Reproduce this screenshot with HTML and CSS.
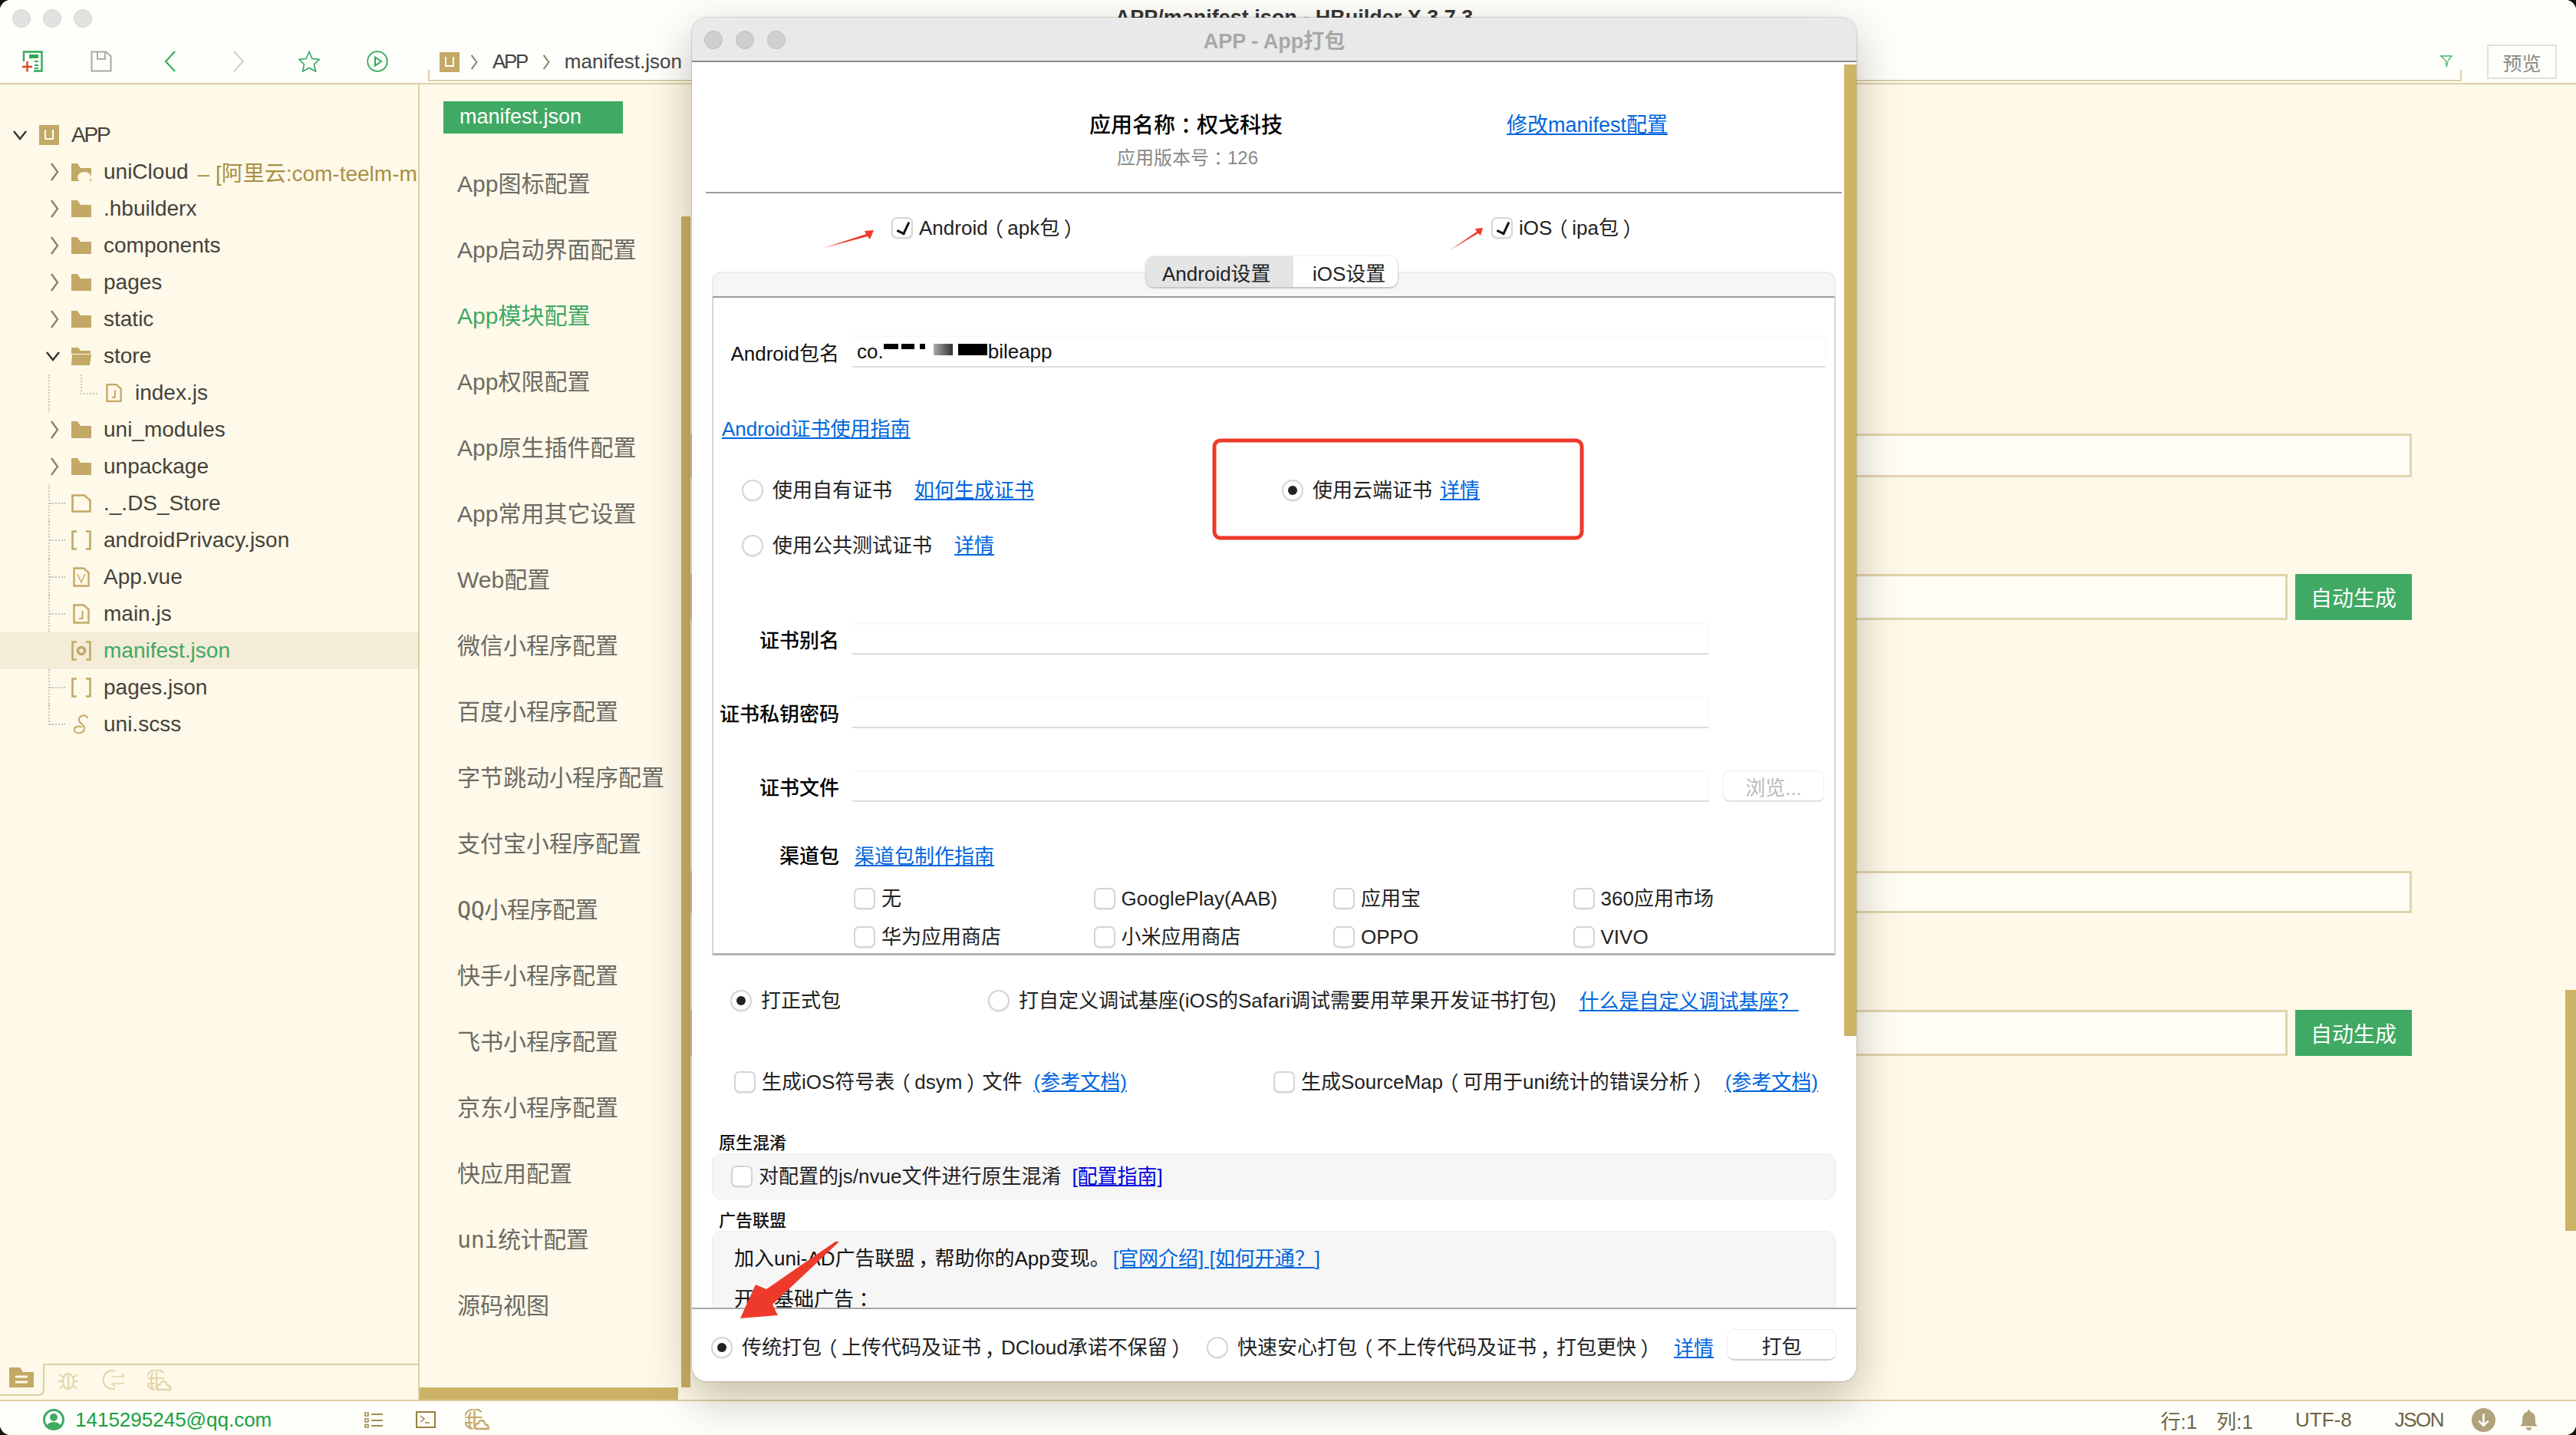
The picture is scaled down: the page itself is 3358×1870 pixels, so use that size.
FILE: index.html
```html
<!DOCTYPE html>
<html lang="zh-CN">
<head>
<meta charset="utf-8">
<title>APP/manifest.json - HBuilder X 3.7.3</title>
<link rel="stylesheet" href="styles.css">
</head>
<body>
<svg class="defs" width="0" height="0" aria-hidden="true">
  <symbol id="chev-r" viewBox="0 0 12 26"><path d="M2 2 L10 13 L2 24" fill="none" stroke="#8a836a" stroke-width="2.4"/></symbol>
  <symbol id="chev-d" viewBox="0 0 18 14"><path d="M1 2 L9 12 L17 2" fill="none" stroke="#333" stroke-width="2.4"/></symbol>
  <symbol id="ulogo" viewBox="0 0 26 26"><rect width="26" height="26" fill="#c3a866"/><path d="M8 6 V18 H18 V6" fill="none" stroke="#fff" stroke-width="2"/></symbol>
  <symbol id="folder" viewBox="0 0 26 22"><path d="M0 0 H8 L12 6 H26 V22 H0Z" fill="#c3a866"/></symbol>
  <symbol id="file" viewBox="0 0 26 24"><path d="M1.500 1.500 H17 L24.500 8 V22.500 H1.500Z" fill="none" stroke="#c3a866" stroke-width="2.600"/></symbol>
  <symbol id="brackets" viewBox="0 0 26 26"><path d="M7 1.500 H1.500 V24.500 H7 M19 1.500 H24.500 V24.500 H19" fill="none" stroke="#c3a866" stroke-width="2.600"/></symbol>
  <symbol id="jsfile" viewBox="0 0 22 26"><path d="M1.500 1.500 H14 L20.500 7 V24.500 H1.500Z" fill="none" stroke="#c3a866" stroke-width="2.400"/><path d="M12.500 9 V19 H8" fill="none" stroke="#c3a866" stroke-width="2"/></symbol>
  <symbol id="globe" viewBox="0 0 32 28"><path d="M21 4 A13 13 0 1 0 10 26 M1 11 H22 M1 18 H10 M12 2 V26 M7 4 Q3 14 7 25" fill="none" stroke="currentColor" stroke-width="2.200"/><path d="M14 26 Q10 20 17 19 Q19 13 24 16 Q26 19 26 20 Q31 21 30 26 Z" fill="none" stroke="currentColor" stroke-width="2.400"/></symbol>
</svg>

<div class="window">
  <header class="header">
    <div class="titlebar">
      <div class="lights"><i></i><i></i><i></i></div>
      <div class="app-title">APP/manifest.json - HBuilder X 3.7.3</div>
    </div>
    <div class="toolbar">
      <svg class="tool t-new" viewBox="0 0 28 28"><path d="M3 14 V1.500 H26.500 V26.500 H16" fill="none" stroke="#2eaa58" stroke-width="2.400"/><rect x="10" y="5" width="12" height="5" fill="#2eaa58"/><path d="M17 14 H22 M17 19 H22 M17 23 H22" stroke="#2eaa58" stroke-width="2"/><path d="M1 21 H14 M7.500 14 V27.500" stroke="#e0452a" stroke-width="2.400"/></svg>
      <svg class="tool t-save" viewBox="0 0 28 28"><path d="M1.500 1.500 H20 L26.500 7 V26.500 H1.500Z M9 1.500 V11 H19 V1.500" fill="none" stroke="#aaa9a4" stroke-width="2"/></svg>
      <svg class="tool t-back" viewBox="0 0 18 28"><path d="M15 1 L3 14 L15 27" fill="none" stroke="#2eaa58" stroke-width="2"/></svg>
      <svg class="tool t-fwd" viewBox="0 0 18 28"><path d="M3 1 L15 14 L3 27" fill="none" stroke="#cfcfcc" stroke-width="2"/></svg>
      <svg class="tool t-star" viewBox="0 0 28 28"><path d="M14 1.500 L18 10.500 L27 11.500 L20.500 18 L22.500 27 L14 22.500 L5.500 27 L7.500 18 L1 11.500 L10 10.500Z" fill="none" stroke="#2eaa58" stroke-width="1.600"/></svg>
      <svg class="tool t-play" viewBox="0 0 28 28"><circle cx="14" cy="14" r="12.800" fill="none" stroke="#2eaa58" stroke-width="1.800"/><path d="M11 8.500 L19 14 L11 19.500Z" fill="none" stroke="#2eaa58" stroke-width="2"/></svg>
      <div class="crumbs">
        <svg class="c-logo"><use href="#ulogo"/></svg>
        <svg class="c-sep"><use href="#chev-r"/></svg>
        <span class="c-app">APP</span>
        <svg class="c-sep"><use href="#chev-r"/></svg>
        <span>manifest.json</span>
        <svg class="funnel" viewBox="0 0 16 16"><path d="M1 1 H15 L10 7 L8.500 15 L7 7Z" fill="none" stroke="#3fb765" stroke-width="1.300"/></svg>
      </div>
      <button class="preview">预览</button>
    </div>
  </header>

  <div class="workspace">
    <aside class="sidebar">
      <div class="tree">
        <div class="row lvl0"><svg class="chev0"><use href="#chev-d"/></svg><svg class="ic"><use href="#ulogo"/></svg><span class="caps">APP</span></div>
        <div class="row lvl1"><svg class="chev"><use href="#chev-r"/></svg><svg class="ic" viewBox="0 0 26 24"><path d="M0 1 H8 L12 7 H26 V24 H0Z" fill="#c3a866"/><ellipse cx="17" cy="19" rx="9" ry="7" fill="#fff8e2"/></svg><span class="name">uniCloud</span><span class="cloud">– [阿里云:com-teelm-m</span></div>
        <div class="row lvl1"><svg class="chev"><use href="#chev-r"/></svg><svg class="ic"><use href="#folder"/></svg><span class="name">.hbuilderx</span></div>
        <div class="row lvl1"><svg class="chev"><use href="#chev-r"/></svg><svg class="ic"><use href="#folder"/></svg><span class="name">components</span></div>
        <div class="row lvl1"><svg class="chev"><use href="#chev-r"/></svg><svg class="ic"><use href="#folder"/></svg><span class="name">pages</span></div>
        <div class="row lvl1"><svg class="chev"><use href="#chev-r"/></svg><svg class="ic"><use href="#folder"/></svg><span class="name">static</span></div>
        <div class="row lvl1"><svg class="chev chev-open"><use href="#chev-d"/></svg><svg class="ic" viewBox="0 0 26 24"><path d="M0 3 V1 H9 L12 5 H25 V9 H0Z M1 10 H26 L24 24 H0Z" fill="#c3a866"/></svg><span class="name">store</span></div>
        <div class="row lvl2 g-inner"><svg class="ic-sm"><use href="#jsfile"/></svg><span class="name">index.js</span></div>
        <div class="row lvl1"><svg class="chev"><use href="#chev-r"/></svg><svg class="ic"><use href="#folder"/></svg><span class="name">uni_modules</span></div>
        <div class="row lvl1"><svg class="chev"><use href="#chev-r"/></svg><svg class="ic"><use href="#folder"/></svg><span class="name">unpackage</span></div>
        <div class="row lvl1 guide"><span class="chev"></span><svg class="ic"><use href="#file"/></svg><span class="name">._.DS_Store</span></div>
        <div class="row lvl1 guide"><span class="chev"></span><svg class="ic"><use href="#brackets"/></svg><span class="name">androidPrivacy.json</span></div>
        <div class="row lvl1 guide"><span class="chev"></span><svg class="ic" viewBox="0 0 26 26"><path d="M3.500 1.500 H16 L22.500 7 V24.500 H3.500Z" fill="none" stroke="#c3a866" stroke-width="2.400"/><path d="M8 9 L13 20 L18 9" fill="none" stroke="#c3a866" stroke-width="1.400"/></svg><span class="name">App.vue</span></div>
        <div class="row lvl1 guide"><span class="chev"></span><svg class="ic" viewBox="0 0 26 26"><path d="M3.500 1.500 H16 L22.500 7 V24.500 H3.500Z" fill="none" stroke="#c3a866" stroke-width="2.400"/><path d="M14.500 9 V19 H10" fill="none" stroke="#c3a866" stroke-width="2"/></svg><span class="name">main.js</span></div>
        <div class="row lvl1 selected"><span class="chev"></span><svg class="ic" viewBox="0 0 26 26"><path d="M7 1.500 H1.500 V24.500 H7 M19 1.500 H24.500 V24.500 H19" fill="none" stroke="#c3a866" stroke-width="2.600"/><circle cx="13" cy="13" r="4.500" fill="none" stroke="#c3a866" stroke-width="3.500"/></svg><span class="name">manifest.json</span></div>
        <div class="row lvl1 guide"><span class="chev"></span><svg class="ic"><use href="#brackets"/></svg><span class="name">pages.json</span></div>
        <div class="row lvl1 guide last"><span class="chev"></span><svg class="ic" viewBox="0 0 26 26"><path d="M21 5 C20 -1 10 1 10 7 C10 13 18 12 17 19 C16 25 6 26 4 21 C3 16 10 14 14 17" fill="none" stroke="#c3a866" stroke-width="2"/></svg><span class="name">uni.scss</span></div>
      </div>
      <div class="side-tabs">
        <div class="side-tab"><svg class="st-file" viewBox="0 0 32 26"><path d="M0 0 H14 L18 6 H32 V26 H0Z" fill="#c3a866"/><path d="M8 12 H24 M8 19 H24" stroke="#fff8e2" stroke-width="3"/></svg></div>
        <div class="side-rest">
          <svg class="st-ic bug" viewBox="0 0 28 26"><ellipse cx="14" cy="15" rx="7" ry="10" fill="none" stroke="currentColor" stroke-width="2"/><path d="M14 5 V25 M2 6 L8 10 M26 6 L20 10 M1 15 H7 M21 15 H27 M3 25 L8 20 M25 25 L20 20" fill="none" stroke="currentColor" stroke-width="2"/></svg>
          <svg class="st-ic hist" viewBox="0 0 32 26"><path d="M18 1.500 A12 12 0 1 0 18 24.500" fill="none" stroke="currentColor" stroke-width="2"/><path d="M14 9 H30 M26 5 L30 9 M14 18 H30 M18 22 L14 18" fill="none" stroke="currentColor" stroke-width="1.600"/></svg>
          <svg class="st-ic glob"><use href="#globe"/></svg>
        </div>
      </div>
    </aside>

    <nav class="nav">
      <div class="nav-active">manifest.json</div>
      <a class="nav-item">App图标配置</a>
      <a class="nav-item">App启动界面配置</a>
      <a class="nav-item on">App模块配置</a>
      <a class="nav-item">App权限配置</a>
      <a class="nav-item">App原生插件配置</a>
      <a class="nav-item">App常用其它设置</a>
      <a class="nav-item">Web配置</a>
      <a class="nav-item">微信小程序配置</a>
      <a class="nav-item">百度小程序配置</a>
      <a class="nav-item">字节跳动小程序配置</a>
      <a class="nav-item">支付宝小程序配置</a>
      <a class="nav-item mono">QQ小程序配置</a>
      <a class="nav-item">快手小程序配置</a>
      <a class="nav-item">飞书小程序配置</a>
      <a class="nav-item">京东小程序配置</a>
      <a class="nav-item">快应用配置</a>
      <a class="nav-item mono">uni统计配置</a>
      <a class="nav-item">源码视图</a>
      <div class="nav-vbar"></div>
      <div class="nav-hbar"></div>
    </nav>

    <main class="form">
      <div class="f-row f1"><div class="f-input"></div></div>
      <div class="f-row f2"><div class="f-input"></div><button class="f-btn">自动生成</button></div>
      <div class="f-row f3"><div class="f-input"></div></div>
      <div class="f-row f4"><div class="f-input"></div><button class="f-btn">自动生成</button></div>
      <div class="form-bar"></div>
    </main>
  </div>

  <footer class="status">
    <svg class="user" viewBox="0 0 28 28"><circle cx="14" cy="14" r="12.500" fill="#fff" stroke="#40a963" stroke-width="3"/><circle cx="14" cy="11" r="5" fill="#40a963"/><path d="M4 24 Q6 17 14 17 Q22 17 24 24 Q14 30 4 24Z" fill="#40a963"/></svg>
    <span class="email">1415295245@qq.com</span>
    <svg class="s-list" viewBox="0 0 24 21"><path d="M1 1 H5 V5 H1Z M1 9 H5 V13 H1Z M1 16.500 H5 V20 H1Z" fill="none" stroke="#a58c4e" stroke-width="1.600"/><path d="M9 3 H24 M9 11 H24 M9 18 H24" stroke="#a58c4e" stroke-width="2"/></svg>
    <svg class="s-term" viewBox="0 0 26 22"><rect x="1" y="1" width="24" height="20" fill="none" stroke="#94803f" stroke-width="2"/><path d="M6 6 L11 10 L6 14 M12 15 H18" fill="none" stroke="#94803f" stroke-width="1.400"/></svg>
    <svg class="s-globe"><use href="#globe"/></svg>
    <div class="s-right">
      <span class="s-pos">行:1</span>
      <span class="s-col">列:1</span>
      <span class="s-enc">UTF-8</span>
      <span class="s-lang">JSON</span>
      <svg class="s-down" viewBox="0 0 30 30"><circle cx="15" cy="15" r="15" fill="#b0a27a"/><path d="M15 7 V22 M9 16 L15 22 L21 16" fill="none" stroke="#fff" stroke-width="2.400"/></svg>
      <svg class="s-bell" viewBox="0 0 24 30"><path d="M12 1 Q14 1 14 4 Q21 6 21 14 V20 L24 24 H0 L3 20 V14 Q3 6 10 4 Q10 1 12 1Z M8 26 H16 Q15 30 12 30 Q9 30 8 26Z" fill="#b0a27a"/></svg>
    </div>
  </footer>

  <section class="dialog">
    <div class="dlg-title">
      <div class="lights dlg-lights"><i></i><i></i><i></i></div>
      <span>APP - App打包</span>
    </div>
    <div class="dlg-body">
      <div class="dlg-bar"></div>
      <div class="app-info">
        <div class="app-meta">
          <div class="app-name">应用名称<b class="pn">：</b>权戈科技</div>
          <div class="app-ver">应用版本号<b class="pn">：</b>126</div>
        </div>
        <a class="link app-link">修改manifest配置</a>
      </div>
      <div class="platforms">
        <label class="opt plat-a"><i class="check on"></i>Android<b class="pn">（</b>apk包<b class="pn">）</b></label>
        <label class="opt plat-i"><i class="check on"></i>iOS<b class="pn">（</b>ipa包<b class="pn">）</b></label>
      </div>
      <div class="tabbox">
        <div class="tabs"><span class="tab sel">Android设置</span><span class="tab">iOS设置</span></div>
        <div class="tab-head"></div>
        <div class="tab-body">
          <div class="fr fr-pkg">
            <label class="lbl">Android包名</label>
            <div class="inp pkg"><span>co.</span><span class="redact"><i class="r1"></i><i class="r2"></i><i class="r3"></i><i class="r4"></i><i class="r5"></i></span><span>bileapp</span></div>
          </div>
          <a class="link guide-link">Android证书使用指南</a>
          <div class="cert cert1">
            <label class="opt c-left"><i class="radio"></i>使用自有证书<a class="link thin l-a">如何生成证书</a></label>
            <label class="opt c-right"><i class="radio on"></i>使用云端证书<a class="link thin l-b">详情</a></label>
          </div>
          <div class="cert cert2">
            <label class="opt c-left"><i class="radio"></i>使用公共测试证书<a class="link thin l-a">详情</a></label>
          </div>
          <div class="fr fr-a"><label class="lbl strong">证书别名</label><div class="inp short"></div></div>
          <div class="fr fr-b"><label class="lbl strong">证书私钥密码</label><div class="inp short"></div></div>
          <div class="fr fr-c"><label class="lbl strong">证书文件</label><div class="inp short"></div><button class="browse">浏览...</button></div>
          <div class="fr fr-d"><label class="lbl strong">渠道包</label><a class="link ch-link">渠道包制作指南</a></div>
          <div class="channels">
            <label class="opt"><i class="check"></i>无</label>
            <label class="opt"><i class="check"></i>GooglePlay(AAB)</label>
            <label class="opt"><i class="check"></i>应用宝</label>
            <label class="opt"><i class="check"></i>360应用市场</label>
            <label class="opt"><i class="check"></i>华为应用商店</label>
            <label class="opt"><i class="check"></i>小米应用商店</label>
            <label class="opt"><i class="check"></i>OPPO</label>
            <label class="opt"><i class="check"></i>VIVO</label>
          </div>
        </div>
      </div>
      <div class="mode">
        <label class="opt m-a"><i class="radio on"></i>打正式包</label>
        <label class="opt m-b"><i class="radio"></i>打自定义调试基座(iOS的Safari调试需要用苹果开发证书打包)</label>
        <a class="link m-link">什么是自定义调试基座<b class="pn">？</b></a>
      </div>
      <div class="extras">
        <label class="opt e-a"><i class="check"></i>生成iOS符号表<b class="pn">（</b>dsym<b class="pn">）</b>文件<a class="link e-l1">(参考文档)</a></label>
        <label class="opt e-b"><i class="check"></i>生成SourceMap<b class="pn">（</b>可用于uni统计的错误分析<b class="pn">）</b><a class="link e-l2">(参考文档)</a></label>
      </div>
      <div class="sec-title s1">原生混淆</div>
      <div class="panel p1"><label class="opt"><i class="check"></i>对配置的js/nvue文件进行原生混淆<a class="link dark p-l">[配置指南]</a></label></div>
      <div class="sec-title s2">广告联盟</div>
      <div class="panel p2">
        <div class="ad-line">加入uni-AD广告联盟<b class="pn">，</b>帮助你的App变现。<a class="link ad-l">[官网介绍] [如何开通<b class="pn">？</b>]</a></div>
        <div class="ad-line ad2">开通基础广告<b class="pn">：</b></div>
      </div>
    </div>
    <div class="dlg-foot">
      <label class="opt ft-a"><i class="radio on"></i>传统打包<b class="pn">（</b>上传代码及证书<b class="pn">，</b>DCloud承诺不保留<b class="pn">）</b></label>
      <label class="opt ft-b"><i class="radio"></i>快速安心打包<b class="pn">（</b>不上传代码及证书<b class="pn">，</b>打包更快<b class="pn">）</b></label>
      <a class="link ft-l">详情</a>
      <button class="pack">打包</button>
    </div>
  </section>

  <svg class="marks" viewBox="0 0 3358 1870">
    <polygon points="1074,323 1129,305 1127,301 1139,300 1134,312 1131,308"/>
    <polygon points="1890,326 1925,302 1923,298 1933,297 1930,307 1927,304"/>
    <rect class="mark-box" x="1583" y="574" width="479" height="127" rx="8"/>
    <polygon points="1094,1618 1007,1700 1014,1714 965,1718 985,1674 999,1680 1089,1618"/>
  </svg>
</div>
</body>
</html>
```
FILE: styles.css
```css
* { box-sizing: border-box; }
html, body { margin: 0; padding: 0; }
body {
  width: 3358px; height: 1870px; overflow: hidden; background: #15130f;
  font-family: "Liberation Sans", "Noto Sans CJK SC", sans-serif;
  font-size: 26px; color: #222; text-spacing-trim: space-all;
}
.defs { position: absolute; }
em, i { font-style: normal; }
button { font: inherit; padding: 0; }
.pn { display: inline-block; width: 1em; text-align: center; font-family: "Noto Sans CJK SC", sans-serif; font-weight: inherit; font-feature-settings: "palt"; }
.link .pn { display: inline; font-family: "Noto Sans CJK TC", sans-serif; font-feature-settings: normal; }

.window {
  position: relative; width: 3358px; height: 1870px; overflow: hidden;
  border-radius: 14px; background: #fef9e9; display: flex; flex-direction: column;
}

/* header */
.header { height: 110px; flex: none; background: #fefefb; border-bottom: 2px solid #dccfa2; }
.titlebar { height: 48px; display: grid; grid-template-columns: 1fr auto 1fr; padding: 12px 0 0 16px; }
.lights { display: flex; gap: 16px; }
.lights i { width: 24px; height: 24px; border-radius: 50%; background: #e2e2e0; border: 1px solid #d3d3d0; }
.app-title { grid-column: 2; font-size: 27px; line-height: 12px; color: #333; font-weight: 700; margin-top: 5px; }
.toolbar { height: 50px; display: flex; align-items: flex-start; padding-left: 28px; }
.tool { flex: none; height: 28px; margin-top: 18px; }
.t-new { width: 28px; }
.t-save { width: 28px; margin-left: 62px; }
.t-back { width: 18px; margin-left: 67px; }
.t-fwd { width: 18px; margin-left: 71px; }
.t-star { width: 28px; margin-left: 69px; }
.t-play { width: 28px; margin-left: 61px; }
.crumbs {
  width: 2651px; height: 15px; margin: 43px 0 0 52px; flex: none; position: relative;
  border: 2px solid #dccfa2; border-top: 0; display: flex; align-items: center; color: #444;
  overflow: visible;
}
.crumbs > * { transform: translateY(-17px); white-space: nowrap; }
.c-logo { width: 26px; height: 26px; margin-left: 13px; }
.c-sep { width: 10px; height: 22px; margin: 0 19px 0 14px; }
.c-sep + span + .c-sep { margin-left: 20px; margin-right: 19px; }
.c-app { letter-spacing: -2.4px; }
.funnel { position: absolute; right: 10px; top: -19px; width: 16px; height: 16px; transform: none; }
.preview { flex: none; width: 91px; height: 45px; margin: 10px 0 0 33px; background: #fefefb; border: 2px solid #dfdfdc; color: #8a8a86; font-size: 25px; }

/* workspace */
.workspace { flex: 1; display: flex; min-height: 0; }
.sidebar { width: 547px; flex: none; border-right: 2px solid #dccfa2; display: flex; flex-direction: column; }
.tree { flex: 1; padding-top: 42px; font-size: 28px; color: #45423a; }
.row { height: 48px; display: flex; align-items: center; position: relative; white-space: nowrap; overflow: hidden; }
.lvl0 { padding-left: 17px; }
.lvl1 { padding-left: 65px; }
.lvl2 { padding-left: 138px; }
.chev0 { width: 18px; height: 14px; margin-right: 16px; }
.chev { width: 12px; height: 26px; margin-right: 16px; flex: none; }
.chev-open { width: 18px; height: 14px; margin-left: -5px; margin-right: 15px; }
.ic { width: 26px; height: 26px; margin-right: 16px; flex: none; }
.ic-sm { width: 21px; height: 26px; margin-right: 17px; flex: none; }
.caps { letter-spacing: -2.2px; }
.cloud { color: #a98f45; margin-left: 12px; }
.selected { background: #f3ecd7; }
.selected .name { color: #40a963; }
.guide::before, .g-inner::before {
  content: ""; position: absolute; left: 63px; top: 0; bottom: 0; border-left: 2px dotted #c9c7bb;
}
.guide::after {
  content: ""; position: absolute; left: 65px; top: 23px; width: 20px; border-top: 2px dotted #c9c7bb;
}
.guide.last::before { bottom: 23px; }
.g-inner::after {
  content: ""; position: absolute; left: 105px; top: 0; width: 20px; height: 24px;
  border-left: 2px dotted #c9c7bb; border-bottom: 2px dotted #c9c7bb;
}
.side-tabs { height: 47px; flex: none; display: flex; }
.side-tab { width: 58px; height: 42px; border-right: 2px solid #dccfa2; border-bottom: 2px solid #dccfa2; border-bottom-right-radius: 8px; padding: 5px 0 0 12px; }
.st-file { width: 32px; height: 26px; display: block; }
.side-rest { flex: 1; border-top: 2px solid #dccfa2; display: flex; align-items: flex-start; padding-top: 6px; color: #e3d5a9; }
.st-ic { height: 26px; color: #e3d5a9; }
.bug { width: 28px; margin-left: 17px; }
.hist { width: 32px; margin-left: 29px; }
.glob { width: 32px; height: 28px; margin-left: 28px; }

.nav { width: 353px; flex: none; position: relative; padding: 22px 0 0 49px; font-size: 30px; color: #6c6b63; overflow: hidden; }
.nav-active { width: 234px; height: 42px; margin-left: -18px; padding-left: 21px; background: #40a963; color: #fff; font-size: 27px; line-height: 40px; margin-bottom: 23px; }
.nav-item { display: block; height: 86px; line-height: 86px; white-space: nowrap; }
.nav-item.on { color: #40a963; }
.nav-item.mono { font-family: "DejaVu Sans Mono", "Noto Sans CJK SC", monospace; letter-spacing: -.4px; }
.nav-vbar { position: absolute; left: 341px; top: 172px; width: 12px; bottom: 16px; background: #c9af62; }
.nav-hbar { position: absolute; left: 0; bottom: 0; width: 337px; height: 16px; background: #cdb366; }

.form { flex: 1; position: relative; padding: 455px 214px 0 0; }
.f-row { display: flex; justify-content: flex-end; gap: 10px; }
.f-input { flex: 1; background: #fffdf6; border: 3px solid #e0d5ad; }
.f-btn { width: 152px; border: 0; background: #40a963; color: #fff; font-size: 28px; }
.f1 { height: 57px; }
.f2 { height: 60px; margin-top: 126px; }
.f3 { height: 55px; margin-top: 327px; }
.f4 { height: 60px; margin-top: 126px; }
.form-bar { position: absolute; right: 0; top: 1180px; width: 14px; height: 314px; background: #cdb366; }

/* status */
.status { height: 46px; flex: none; background: #fefefb; border-top: 2px solid #dccfa2; display: flex; align-items: center; padding: 4px 0 0 56px; }
.user { width: 28px; height: 28px; }
.email { margin-left: 14px; color: #1aa13f; }
.s-list { width: 24px; height: 21px; margin-left: 121px; }
.s-term { width: 26px; height: 22px; margin-left: 43px; }
.s-globe { width: 33px; height: 28px; margin-left: 38px; color: #c3a866; }
.s-right { margin-left: auto; padding-right: 50px; display: flex; align-items: center; color: #6e6444; }
.s-col { margin-left: 25px; }
.s-enc { margin-left: 55px; }
.s-lang { margin-left: 56px; letter-spacing: -1.5px; }
.s-down { width: 31px; height: 31px; margin-left: 37px; }
.s-bell { width: 23px; height: 28px; margin-left: 32px; }

/* dialog */
.dialog {
  position: absolute; left: 902px; top: 23px; width: 1518px; height: 1777px; background: #fff;
  border-radius: 20px; overflow: hidden; display: flex; flex-direction: column;
  box-shadow: 0 0 2px rgba(0,0,0,.45), 0 22px 60px rgba(70,60,30,.32);
}
.dlg-title { height: 58px; flex: none; background: #e9e9e9; border-bottom: 2px solid #8a8a8a; display: flex; align-items: center; justify-content: center; position: relative; color: #a8a8a8; font-weight: 700; font-size: 27px; }
.dlg-lights { position: absolute; left: 16px; top: 17px; gap: 17px; }
.dlg-lights i { background: #cfcfcf; border-color: #bcbcbc; }
.dlg-body { flex: 1; min-height: 0; overflow: hidden; position: relative; }
.dlg-bar { position: absolute; right: 0; top: 3px; width: 16px; height: 1266px; background: #cdb366; }
.link { color: #0066dd; text-decoration: underline; cursor: pointer; }

.app-info { margin-left: 18px; width: 1481px; height: 171px; border-bottom: 2px solid #9c9c9c; display: flex; padding-top: 60px; }
.app-meta { margin-left: 500px; width: 251px; }
.app-name { font-size: 28px; line-height: 40px; color: #000; font-weight: 500; white-space: nowrap; }
.app-ver { font-size: 24px; line-height: 32px; margin: 4px 0 0 36px; color: #888; white-space: nowrap; }
.app-link { font-size: 27px; line-height: 40px; margin: 2px 0 0 293px; height: 40px; }

.opt { display: inline-flex; align-items: center; white-space: nowrap; line-height: 36px; }
.check { flex: none; width: 28px; height: 28px; border: 2px solid #d4d4d4; border-radius: 7px; background: #fff; margin-right: 8px; position: relative; box-shadow: 0 1px 1px rgba(0,0,0,.08); }
.check.on::after { content: ""; position: absolute; left: 8px; top: 2px; width: 8px; height: 15px; border: solid #111; border-width: 0 3px 3px 0; transform: rotate(25deg); }
.radio { flex: none; width: 28px; height: 28px; border: 2px solid #d4d4d4; border-radius: 50%; background: #fff; margin-right: 12px; position: relative; box-shadow: 0 1px 1px rgba(0,0,0,.08); }
.radio.on::after { content: ""; position: absolute; left: 6px; top: 6px; width: 12px; height: 12px; border-radius: 50%; background: #222; }

.platforms { height: 102px; display: flex; padding: 27px 0 0 260px; align-items: flex-start; }
.plat-a { width: 245px; }
.plat-i { margin-left: 537px; }

.tabbox { position: relative; margin-left: 26px; width: 1465px; }
.tabs { position: absolute; left: 566px; top: -20px; height: 40px; display: flex; background: #fff; border-radius: 10px; overflow: hidden; box-shadow: 0 1px 3px rgba(0,0,0,.35); z-index: 1; }
.tab { display: flex; align-items: center; width: 136px; padding-left: 25px; }
.tab.sel { background: #e4e4e4; width: 192px; padding-left: 21px; }
.tab-head { height: 34px; background: #f6f6f6; border: 2px solid #ececec; border-bottom: 2px solid #9a9a9a; border-radius: 12px 12px 0 0; }
.tab-body { height: 857px; border: 2px solid #d6d6d6; border-top: 0; border-bottom: 3px solid #b5b5b5; overflow: hidden; }
.fr { display: flex; align-items: center; }
.lbl { width: 164px; text-align: right; margin-right: 17px; flex: none; color: #111; white-space: nowrap; }
.strong { font-weight: 500; color: #000; }
.inp { height: 42px; border-top: 2px solid #f8f8f8; border-bottom: 2px solid #dcdcdc; border-right: 1px solid #f8f8f8; background: #fff; display: flex; align-items: center; padding-left: 6px; color: #111; }
.pkg { width: 1269px; }
.short { width: 1117px; }
.fr-pkg { margin-top: 49px; }
.redact { display: inline-flex; align-items: flex-start; width: 136px; height: 26px; margin-top: 6px; }
.redact i { display: block; background: #000; }
.r1 { width: 19px; height: 7px; }
.r2 { width: 17px; height: 7px; margin-left: 4px; }
.r3 { width: 7px; height: 7px; margin-left: 7px; }
.r4 { width: 25px; height: 15px; margin-left: 11px; background: linear-gradient(90deg, #aaa, #333) !important; }
.r5 { width: 38px; height: 15px; margin-left: 7px; }
.guide-link { display: block; width: max-content; margin: 62px 0 0 11px; line-height: 36px; }
.cert { display: flex; height: 40px; padding-left: 37px; }
.cert1 { margin-top: 42px; }
.cert2 { margin-top: 32px; }
.c-left { width: 704px; }
.l-a { margin-left: 29px; }
.l-b { margin-left: 10px; }
.fr-a { margin-top: 81px; }
.fr-b { margin-top: 55px; }
.fr-c { margin-top: 55px; }
.fr-d { margin-top: 53px; line-height: 36px; }
.fr-a .inp, .fr-b .inp, .fr-c .inp { height: 41px; }
.browse { width: 132px; height: 41px; margin-left: 18px; border: 1px solid #efefef; border-bottom: 2px solid #e0e0e0; border-radius: 8px; background: #fff; color: #bbb; }
.ch-link { margin-left: 3px; }
.channels { display: grid; grid-template-columns: repeat(4, 312.5px); grid-auto-rows: 50px; margin: 12px 0 0 183px; }

.mode { display: flex; height: 40px; margin-top: 39px; padding-left: 50px; align-items: center; }
.m-a { width: 336px; }
.m-link { margin: 0 0 3px 30px; white-space: nowrap; }
.extras { display: flex; height: 40px; margin-top: 66px; align-items: center; padding-left: 55px; }
.e-a { width: 703px; }
.e-l1 { margin-left: 15px; }
.e-l2 { margin-left: 21px; }
.sec-title { font-size: 22px; font-weight: 500; color: #111; margin-left: 35px; height: 26px; line-height: 26px; }
.s1 { margin-top: 47px; }
.s2 { margin-top: 15px; }
.panel { margin-left: 26px; width: 1465px; background: #f6f6f6; border: 1px solid #ececec; border-radius: 12px; }
.p1 { height: 60px; padding-left: 24px; display: flex; align-items: center; }
.p2 { height: 140px; padding: 15px 0 0 28px; color: #111; }
.p-l { margin-left: 14px; color: #0000dd; }
.ad-line { line-height: 36px; white-space: nowrap; }
.ad2 { margin-top: 15px; }
.ad-l { margin-left: 4px; }

.dlg-foot { height: 96px; flex: none; border-top: 2px solid #a8a8a8; background: #fff; display: flex; align-items: center; padding: 6px 0 0 25px; position: relative; }
.ft-a { width: 646px; }
.ft-b { width: 609px; }
.ft-l { margin-bottom: 3px; }
.pack { position: absolute; left: 1349px; top: 26px; width: 143px; height: 41px; border: 1px solid #ececec; border-bottom: 2px solid #d0d0d0; border-radius: 10px; background: #fff; color: #222; }

.marks { position: absolute; left: 0; top: 0; width: 3358px; height: 1870px; pointer-events: none; }
.marks polygon { fill: #ee3a2a; }
.mark-box { fill: none; stroke: #ee3a2a; stroke-width: 5; }
```
